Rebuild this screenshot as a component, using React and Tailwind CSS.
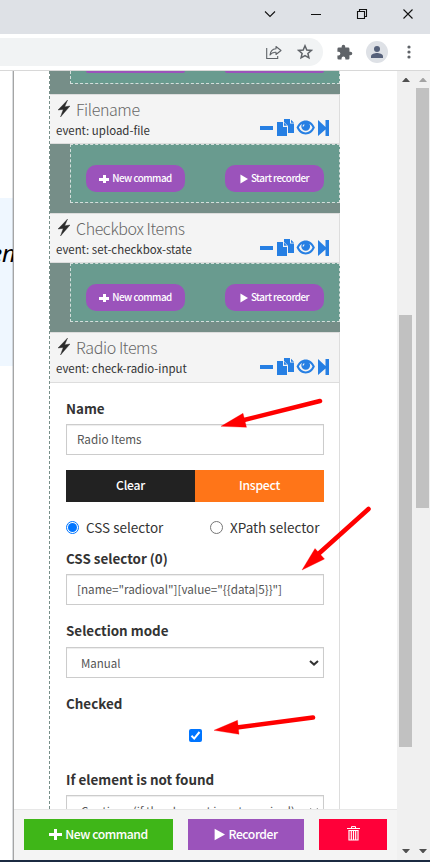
import React from 'react';

const Plus = ({ className }) => (
  <svg viewBox="0 0 12 12" className={className} fill="currentColor" shapeRendering="crispEdges">
    <path d="M4.2 1h3.6v3.2H12v3.6H7.8V11H4.2V7.8H0V4.2h4.2z" />
  </svg>
);

const Play = ({ className }) => (
  <svg viewBox="0 0 9 10" className={className} fill="currentColor" preserveAspectRatio="none">
    <path d="M0.5 0.5L9 5 0.5 9.5z" />
  </svg>
);

const Bolt = () => (
  <svg viewBox="0 0 12 17" className="h-[17px] w-3 shrink-0 fill-[#2b2b2b]">
    <path d="M9.600 0L0 10l5.200-.6L2.500 17 12 6l-5.300.8z" stroke="#2b2b2b" strokeWidth=".4" />
  </svg>
);

const HeaderIcons = () => (
  <svg viewBox="0 0 70 18" className="h-[18px] w-[70px] shrink-0 fill-[#267fe3]">
    <rect x="0" y="7" width="13" height="4" />
    <path d="M17 3h6v5h4v9H17z" />
    <path d="M24 0h6v4.500h4V14h-6V7l-4-4z" />
    <path d="M24 3.500l3 3.200h-3zM31 .8l3 3h-3z" />
    <path
      fillRule="evenodd"
      d="M36.500 8.600C38.500 4 42 1.500 45.700 1.500s7.200 2.500 9.200 7.100c-2 4.600-5.200 6.900-9.200 6.900s-7.200-2.300-9.200-6.900zm2.400 0c1.200 2.800 3.800 4.900 6.800 4.900s5.600-2.100 6.800-4.900c-.8-1.900-1.900-3.100-3.200-3.900.5.9.8 1.700.8 2.600a4.400 4.400 0 0 1-8.800 0c0-.9.3-1.800.8-2.600-1.300.8-2.400 2-3.200 3.900zM44 5.200c-1 .5-1.500 1.400-1.500 2.300h1.300c0-.6.3-1.100.9-1.400z"
    />
    <path d="M58 1l7.500 7V1H69v16h-3.500v-6.500L58 17z" />
  </svg>
);

function EventHeader({ title, event, className = 'h-[50px]', iconOffset = 'pt-[25px]' }) {
  return (
    <div className={`flex shrink-0 justify-between border border-l-0 border-[#ddd] bg-[#f4f4f4] ${className}`}>
      <div className="pl-1.5">
        <div className="flex h-[26px] gap-[6px] pl-[2px] pt-[5px]">
          <Bolt />
          <span className="-mt-px whitespace-nowrap text-[16px] font-light leading-[21px] tracking-[-0.4px] text-[#666]">{title}</span>
        </div>
        <div className="whitespace-nowrap text-[11.450px] leading-[18px] text-[#333]">{event}</div>
      </div>
      <div className={`pr-[9px] ${iconOffset}`}>
        <HeaderIcons />
      </div>
    </div>
  );
}

function Pill({ icon, children }) {
  return (
    <div className="flex h-[27px] w-[99px] items-center justify-center gap-[3px] whitespace-nowrap rounded-[10px] bg-[#9b53bb] text-[9.900px] font-medium leading-[27px] tracking-[-0.52px] text-white">
      {icon}
      <span>{children}</span>
    </div>
  );
}

function Commands() {
  return (
    <div className="h-[69px] shrink-0 bg-[#768e88] pl-5">
      <div className="flex h-[59px] justify-between border border-dashed border-[#d5dfdc] bg-[#699b8f] px-[15px] pt-5">
        <Pill icon={<Plus className="h-[10px] w-[10px]" />}>New commad</Pill>
        <Pill icon={<Play className="h-[10px] w-2" />}>Start recorder</Pill>
      </div>
    </div>
  );
}

function CommandsTail() {
  return (
    <div className="h-[23px] shrink-0 bg-[#768e88] pl-5">
      <div className="flex h-[13px] justify-between border border-t-0 border-dashed border-[#d5dfdc] bg-[#699b8f] px-[15px]">
        <div className="h-0.5 w-[99px] rounded-b-[10px] bg-[#9b53bb]" />
        <div className="h-0.5 w-[99px] rounded-b-[10px] bg-[#9b53bb]" />
      </div>
    </div>
  );
}

const Label = ({ children }) => (
  <div className="h-5 shrink-0 whitespace-nowrap text-[13.400px] font-bold leading-[18px] text-[#333]">{children}</div>
);

function SelectBox({ children }) {
  return (
    <div className="flex h-[31px] items-center justify-between border border-[#ccc] pl-[14px] pr-[4px] text-[11.500px] text-[#555] shadow-[inset_0_1px_1px_rgba(0,0,0,0.075)]">
      <span className="w-[216px] overflow-hidden whitespace-nowrap leading-5">{children}</span>
      <svg viewBox="0 0 10 6" className="h-1.5 w-[10px] shrink-0" fill="none" stroke="#333" strokeWidth="2">
        <path d="M1 1l4 3.600L9 1" />
      </svg>
    </div>
  );
}

function TextBox({ children }) {
  return (
    <div className="h-[31px] whitespace-nowrap border border-[#ccc] pl-[10px] text-[11.700px] leading-[27px] text-[#555] shadow-[inset_0_1px_1px_rgba(0,0,0,0.075)]">
      {children}
    </div>
  );
}

function Form() {
  return (
    <div className="flex h-[426px] shrink-0 flex-col overflow-hidden border-r border-[#ddd] bg-white pl-4 pr-[15px] pt-4">
      <Label>Name</Label>
      <div className="mt-[5px] shrink-0"><TextBox>Radio Items</TextBox></div>
      <div className="mt-[15px] flex h-8 shrink-0 text-center text-[12.200px] font-medium leading-[30px] tracking-[-0.25px] text-white">
        <div className="flex-1 bg-[#222]">Clear</div>
        <div className="flex-1 bg-[#ff7518]">Inspect</div>
      </div>
      <div className="mt-[15px] flex h-5 shrink-0 items-center whitespace-nowrap text-[13.500px] leading-5 text-[#333]">
        <div className="flex w-36 items-center gap-[7px]">
          <span className="flex size-[13px] items-center justify-center rounded-full border border-[#0075ff] bg-white">
            <span className="size-[9px] rounded-full bg-[#0075ff]" />
          </span>
          <span>CSS selector</span>
        </div>
        <div className="flex items-center gap-[7px]">
          <span className="size-[13px] rounded-full border border-[#767676]" />
          <span>XPath selector</span>
        </div>
      </div>
      <div className="mt-3"><Label>CSS selector (0)</Label></div>
      <div className="mt-[5px]"><TextBox>{'[name="radioval"][value="{{data|5}}"]'}</TextBox></div>
      <div className="mt-4"><Label>Selection mode</Label></div>
      <div className="mt-[6px]"><SelectBox>Manual</SelectBox></div>
      <div className="mt-4"><Label>Checked</Label></div>
      <div className="mt-[15px] flex h-[13px] shrink-0 justify-center">
        <svg viewBox="0 0 13 13" className="size-[13px]">
          <rect width="13" height="13" rx="2" fill="#0075ff" />
          <path d="M2.500 6.800l2.700 2.800L10.500 3" fill="none" stroke="#fff" strokeWidth="2" />
        </svg>
      </div>
      <div className="mt-7"><Label>If element is not found</Label></div>
      <div className="mt-[5px]"><SelectBox>Continue (if the element is not required)</SelectBox></div>
    </div>
  );
}

function Arrow({ up, color }) {
  return (
    <svg viewBox="0 0 8 4" className="h-1 w-2" fill={color}>
      <path d={up ? 'M0 4l3.500-4h1L8 4z' : 'M0 0h8L4.500 4h-1z'} />
    </svg>
  );
}

function BrowserBars() {
  return (
    <header className="h-[71px] shrink-0 border-b border-[#d8d8d8] bg-white">
      <div className="flex h-[34px] justify-end bg-[#dee1e6]">
        <svg viewBox="0 0 170 34" className="h-[34px] w-[170px]" fill="none" stroke="#111" strokeWidth="1.100">
          <path d="M5 11.500l5 5 5-5" />
          <path d="M51 14.500h10" shapeRendering="crispEdges" />
          <path d="M97.500 11.500h7v7h-7zM99.500 11.500v-2h7v7h-2" />
          <path d="M143.500 9.500l9 9M152.500 9.500l-9 9" />
        </svg>
      </div>
      <div className="flex h-9 items-center justify-between">
        <div className="flex h-7 w-[323px] items-center justify-end gap-[15px] rounded-r-full bg-[#f1f3f4] pr-[10px]">
          <svg viewBox="0 0 16 16" className="size-4" fill="none" stroke="#5f6368" strokeWidth="1.100">
            <path d="M.7 4v10.500h11V12" />
            <path d="M10 2.500L15 6.500l-5 4V8.300C7.500 8 5.500 8.800 4 11c.3-3.500 2.500-6 6-6.300z" strokeLinejoin="round" />
          </svg>
          <svg viewBox="0 0 16 16" className="size-4" fill="none" stroke="#5f6368" strokeWidth="1.500">
            <path d="M8 1.800l1.800 4.200 4.500.4-3.400 3 1 4.400L8 11.500l-3.900 2.300 1-4.400-3.400-3L6.200 6z" />
          </svg>
        </div>
        <div className="flex items-center pr-[19px]">
          <svg viewBox="0 0 24 24" className="mr-[13px] size-[17px] fill-[#5f6368]">
            <path d="M20.500 11H19V7a2 2 0 0 0-2-2h-4V3.500a2.500 2.500 0 0 0-5 0V5H4a2 2 0 0 0-2 2v3.800h1.500a2.700 2.700 0 0 1 0 5.400H2V20a2 2 0 0 0 2 2h3.800v-1.500a2.700 2.700 0 0 1 5.400 0V22H17a2 2 0 0 0 2-2v-4h1.500a2.500 2.500 0 0 0 0-5z" />
          </svg>
          <svg viewBox="0 0 22 22" className="mr-[19px] size-[22px]">
            <circle cx="11" cy="11" r="11" fill="#dee1e6" />
            <circle cx="11" cy="8" r="3" fill="#56617a" />
            <path d="M5 17v-1.800c0-2.200 4-3.200 6-3.200s6 1 6 3.200V17z" fill="#56617a" />
          </svg>
          <svg viewBox="0 0 4 14" className="h-[14px] w-1 fill-[#5f6368]">
            <circle cx="2" cy="2" r="1.600" /><circle cx="2" cy="7" r="1.600" /><circle cx="2" cy="12" r="1.600" />
          </svg>
        </div>
      </div>
    </header>
  );
}

export default function App() {
  return (
    <div className="relative flex h-[862px] w-[430px] flex-col overflow-hidden bg-white font-['Noto_Sans_CJK_SC','Noto_Sans_CJK_JP',sans-serif]">
      <BrowserBars />
      <div className="flex h-[789px] shrink-0">
        <div className="w-[14px] shrink-0 overflow-hidden border-r border-[#a5a5a5] pt-[127px] shadow-[inset_-1px_0_0_#d9dcdf]">
          <div className="flex h-[168px] justify-end bg-[#eff7ff] pt-[39px] shadow-[inset_-1px_0_0_#cfd6dd]">
            <span className="-mr-[3px] font-['Noto_Sans'] text-[24px] italic leading-8 text-black">en</span>
          </div>
        </div>
        <div className="flex w-[383px] shrink-0 flex-col">
          <div className="ml-[35px] flex h-[738px] w-[291px] flex-col overflow-hidden border-l border-dashed border-[#768e88]">
            <CommandsTail />
            <EventHeader title="Filename" event="event: upload-file" iconOffset="pt-6" />
            <Commands />
            <EventHeader title="Checkbox Items" event="event: set-checkbox-state" />
            <Commands />
            <EventHeader title="Radio Items" event="event: check-radio-input" className="h-[51px]" />
            <Form />
          </div>
          <footer className="flex h-[51px] shrink-0 gap-[15px] border-t border-[#e7e7e7] bg-[#f4f4f4] pl-[10px] pt-[9px] text-[12.200px] font-medium tracking-[-0.45px] text-white">
            <div className="flex h-[31px] w-[149px] items-center justify-center gap-[3px] bg-[#3fb618]">
              <Plus className="size-[13px]" /><span>New command</span>
            </div>
            <div className="flex h-[31px] w-[116px] items-center justify-center gap-[3px] bg-[#9b53bb]">
              <Play className="h-[13px] w-[11px]" /><span>Recorder</span>
            </div>
            <div className="flex h-[31px] w-[68px] items-center justify-center bg-[#ff0039]">
              <svg viewBox="0 0 13 15" className="mb-[3px] h-[15px] w-[13px]" fill="none" stroke="#fff">
                <path d="M0 2.500h13M4.500 2V.6h4V2M1.500 4.500h10" />
                <path d="M2 4.500v9.500h9V4.500M4.300 5v9M6.500 5v9M8.700 5v9" strokeWidth="1.200" />
              </svg>
            </div>
          </footer>
        </div>
        <div className="flex w-[33px] shrink-0 justify-between bg-[#f0f0f0] pl-0.5 pr-px">
          <div className="flex w-[13px] flex-col items-center pt-[7px]">
            <Arrow up color="#505050" />
            <div className="mt-[233px] h-[432px] w-[13px] bg-[#c1c1c1]" />
            <div className="mt-[102px] flex"><Arrow color="#505050" /></div>
          </div>
          <div className="flex w-[13px] flex-col items-center pt-[7px]">
            <Arrow up color="#a3a3a3" />
            <div className="mt-[6px] h-[420px] w-[13px] bg-[#c1c1c1]" />
            <div className="mt-[341px] flex"><Arrow color="#505050" /></div>
          </div>
        </div>
      </div>
      <div className="h-0.5 shrink-0 bg-[#1b2a41]" />
      <svg viewBox="0 0 430 862" className="pointer-events-none absolute inset-0 h-[862px] w-[430px]" fill="red" stroke="red">
        <path d="M320 401L240 421M368.500 509L315 557M313 717.500L233 728" strokeWidth="4.600" strokeLinecap="round" />
        <path d="M221 426.300l22-13 3.500 14zM302 570l13-21.500 9.500 10.500zM214 730.300l23.500-10 1.500 14z" strokeWidth=".3" />
      </svg>
    </div>
  );
}
